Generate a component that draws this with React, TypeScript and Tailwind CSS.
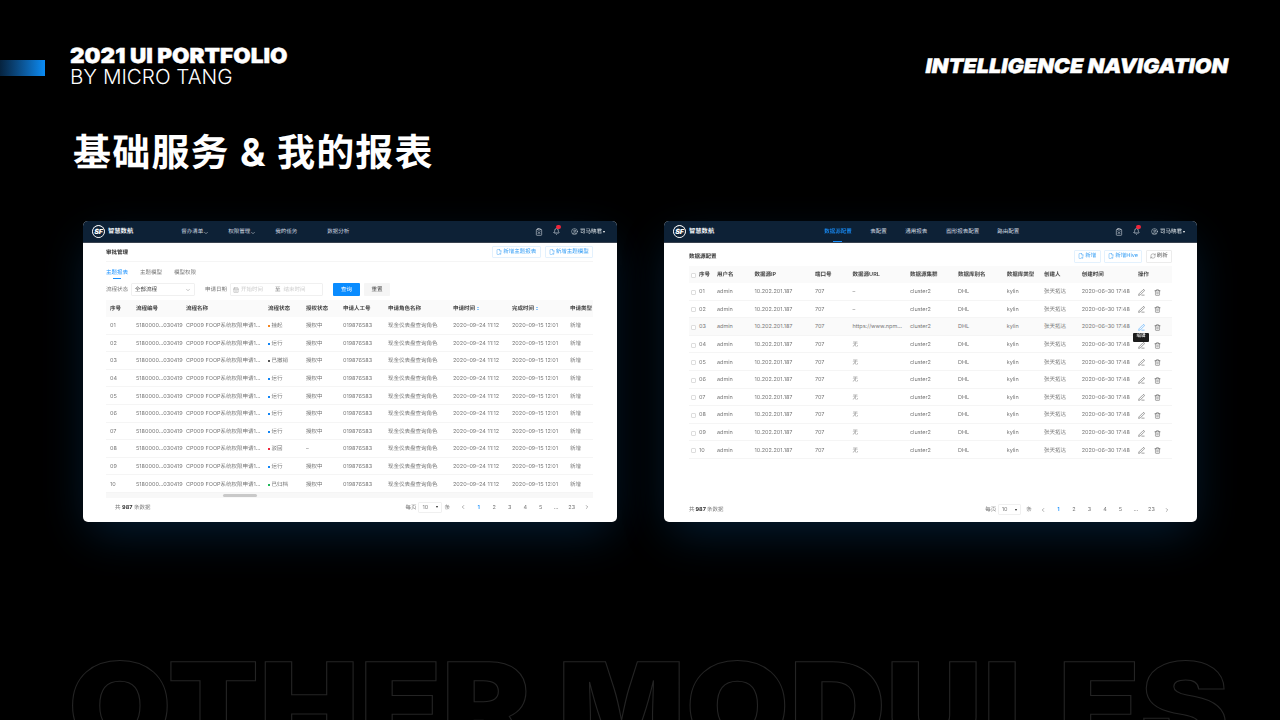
import React from "react";
import { Bell, ChevronDown, ChevronLeft, ChevronRight, CalendarDays, FilePlus2, RefreshCw, PenLine, Trash2, ClipboardX, CircleUser } from "lucide-react";

const cn = "font-['Inter','Noto_Sans_CJK_SC',sans-serif] [text-rendering:geometricPrecision]";

function Logo() {
  return (
    <div className="flex items-center gap-[3px]">
      <div className="w-[13px] h-[13px] rounded-full bg-white flex items-center justify-center border-[1.5px] border-white">
        <div className="w-full h-full rounded-full bg-[#0d2136] flex items-center justify-center text-white text-[7px] leading-none font-black italic">SF</div>
      </div>
      <span className="text-[6.3px] leading-none font-bold text-[#f0f3f6]">智慧数航</span>
    </div>
  );
}

function TopRight() {
  return (
    <div className="flex items-center text-[#e6ebef] text-[5.5px]">
      <ClipboardX size={8} strokeWidth={1.6} />
      <div className="relative ml-[10px]">
        <Bell size={7} strokeWidth={2} />
        <span className="absolute -top-[3px] left-[3.5px] w-[5px] h-[4px] rounded-full bg-[#f0263c]" />
      </div>
      <CircleUser size={7} strokeWidth={1.6} className="ml-[11.5px]" />
      <span className="ml-[1.5px] pt-[2px]">司马晓君</span>
      <span className="ml-[1px] w-0 h-0 border-x-[1.5px] border-x-transparent border-t-[2px] border-t-white" />
    </div>
  );
}

function OutlineButton({ label, w, h, neutral }: { label: string; w: string; h: string; neutral?: boolean }) {
  return (
    <div className={`${w} ${h} border rounded-[1px] flex items-center justify-center gap-[1px] text-[5.5px] ${neutral ? "text-[#555] border-[#ececec]" : "text-[#2f9bf5] border-[#e3f1fd]"}`}>
      {neutral ? <RefreshCw size={6} strokeWidth={1.5} /> : <FilePlus2 size={6} strokeWidth={1.7} />}
      <span className="pt-[1px]">{label}</span>
    </div>
  );
}

function Pagination({ gapSelect, gapUnit, gapPrev, shift }: { gapSelect: string; gapUnit: string; gapPrev: string; shift: string }) {
  const pages = ["1", "2", "3", "4", "5", "…", "23"];
  return (
    <div className={`flex items-center text-[5.5px] text-[#777] ${shift}`}>
      <span className="pt-[1px]">每页</span>
      <div className={`${gapSelect} w-[23.5px] h-[11px] border border-[#f0f0f0] rounded-[1px] flex items-center justify-between px-[3px]`}>
        <span className="pt-[1px]">10</span>
        <span className="w-0 h-0 border-x-[1.5px] border-x-transparent border-t-[2px] border-t-[#222]" />
      </div>
      <span className={`${gapUnit} pt-[1px]`}>条</span>
      <div className={`${gapPrev} w-[15.5px] flex justify-center text-[#444]`}><ChevronLeft size={6} strokeWidth={1.7} /></div>
      {pages.map((p, i) => (
        <span key={p} className={`w-[15.5px] pt-[1px] text-center ${i === 0 ? "text-[#1890ff] font-semibold" : ""}`}>{p}</span>
      ))}
      <div className="w-[15.5px] flex justify-center text-[#444]"><ChevronRight size={6} strokeWidth={1.7} /></div>
    </div>
  );
}

const leftStatus: [string, string][] = [
  ["挂起", "bg-[#f5861f]"], ["运行", "bg-[#1185f5]"], ["已撤销", "bg-[#555555]"], ["运行", "bg-[#1185f5]"], ["运行", "bg-[#1185f5]"],
  ["运行", "bg-[#1185f5]"], ["运行", "bg-[#1185f5]"], ["驳回", "bg-[#f0263c]"], ["运行", "bg-[#1185f5]"], ["已归档", "bg-[#1fb85a]"],
];
const leftCols = "grid grid-cols-[26px_50px_82px_38px_37px_45px_65px_59px_58px_23px] pl-[4px] pt-[2px] items-center whitespace-nowrap";

function SortMark() {
  return (
    <span className="inline-flex flex-col ml-[2px] gap-[1px] align-middle">
      <span className="w-0 h-0 border-x-[1px] border-x-transparent border-b-[1.5px] border-b-[#1890ff]" />
      <span className="w-0 h-0 border-x-[1px] border-x-transparent border-t-[1.5px] border-t-[#1890ff]" />
    </span>
  );
}

const cardClass = "h-[301px] rounded-[5px] shadow-[0_16px_44px_-6px_rgba(12,90,160,0.32)]";
const innerClass = "w-full h-full bg-white rounded-[5px] overflow-hidden flex flex-col blur-[0.4px]";

function LeftCard() {
  return (
    <div className={`w-[534px] ${cardClass}`}>
      <div className={innerClass}>
        <div className="h-[22px] shrink-0 bg-[#0d2136] border-b border-[#39424f] flex items-center pl-[9px] pr-[12px]">
          <Logo />
          <div className="flex items-center text-[5.5px] text-[#d5dce3] ml-[48px] pt-[2px]">
            <span className="flex items-center w-[47px]">督办清单<ChevronDown size={6} strokeWidth={2} /></span>
            <span className="flex items-center w-[47px]">权限管理<ChevronDown size={6} strokeWidth={2} /></span>
            <span className="w-[52px]">我的任务</span>
            <span>数据分析</span>
          </div>
          <div className="ml-auto"><TopRight /></div>
        </div>
        <div className="flex-1 flex flex-col pl-[23px] pr-[24px]">
          <div className="h-[19px] shrink-0 border-b border-[#f5f5f5] flex items-center justify-between">
            <span className="text-[5.5px] font-semibold text-[#333] pt-[2px]">审批管理</span>
            <div className="flex gap-[4px]">
              <OutlineButton label="新增主题报表" w="w-[48.5px]" h="h-[12px]" />
              <OutlineButton label="新增主题模型" w="w-[48.5px]" h="h-[12px]" />
            </div>
          </div>
          <div className="h-[18px] shrink-0 flex items-center text-[5.5px] text-[#777] gap-[12px] pt-[4px]">
            <span className="relative text-[#1890ff]">
              主题报表
              <span className="absolute left-[7px] right-[7px] -bottom-[2px] h-[1px] bg-[#1890ff]" />
            </span>
            <span>主题模型</span>
            <span>模型权限</span>
          </div>
          <div className="h-[13px] mt-[3px] shrink-0 flex items-center text-[5.5px] text-[#777]">
            <span className="w-[25px] pt-[2px]">流程状态</span>
            <div className="w-[64px] h-full border border-[#f0f0f0] rounded-[1px] flex items-center justify-between px-[3px] text-[#444]">
              <span className="pt-[2px]">全部流程</span><ChevronDown size={6} strokeWidth={1.2} />
            </div>
            <span className="ml-[10px] w-[25px] pt-[2px]">申请日期</span>
            <div className="w-[93px] h-full border border-[#f0f0f0] rounded-[1px] flex items-center px-[2px] text-[#ccc]">
              <CalendarDays size={6} strokeWidth={1.2} className="text-[#777]" />
              <span className="ml-[2px] w-[34px] pt-[2px]">开始时间</span>
              <span className="text-[#777] pt-[2px]">至</span>
              <span className="ml-[3px] pt-[2px]">结束时间</span>
            </div>
            <div className="ml-[10px] w-[27px] h-full pt-[2px] bg-[#0a8cff] text-white flex items-center justify-center rounded-[1px]">查询</div>
            <div className="ml-[4px] w-[26px] h-full pt-[2px] bg-[#f5f5f5] text-[#444] flex items-center justify-center rounded-[1px]">重置</div>
          </div>
          <div className={`${leftCols} h-[17px] mt-[4px] shrink-0 bg-[#fafafa] text-[5.5px] font-semibold text-[#444]`}>
            <span>序号</span><span>流程编号</span><span>流程名称</span><span>流程状态</span><span>授权状态</span><span>申请人工号</span><span>申请角色名称</span>
            <span>申请时间<SortMark /></span><span>完成时间<SortMark /></span><span>申请类型</span>
          </div>
          {leftStatus.map(([s, c], i) => (
            <div key={i} className={`${leftCols} h-[17.6px] shrink-0 border-b border-[#f5f5f5] text-[5.5px] text-[#777]`}>
              <span>{String(i + 1).padStart(2, "0")}</span>
              <span>5180000…030419</span>
              <span>CP009 FOOP系统权限申请1…</span>
              <span className="flex items-center gap-[1.5px]"><span className={`w-[2px] h-[2px] ${c}`} />{s}</span>
              <span>{s === "驳回" ? "–" : "授权中"}</span>
              <span>019876583</span>
              <span>现金仪表盘查询角色</span>
              <span>2020–09–24 11:12</span>
              <span>2020–09–15 12:01</span>
              <span>新增</span>
            </div>
          ))}
          <div className="h-[5px] shrink-0 bg-[#f8f8f8] pl-[117px]">
            <div className="w-[34px] h-[3px] mt-[1px] rounded-full bg-[#c9c9c9]" />
          </div>
          <div className="flex-1 flex items-center justify-between text-[5.5px] text-[#777] pl-[9px] pb-[5px]">
            <span className="pt-[1px]">共 <b className="text-[#333]">987</b> 条数据</span>
            <Pagination gapSelect="ml-[2px]" gapUnit="ml-[2.5px]" gapPrev="ml-[5.5px]" shift="-mr-[2px]" />
          </div>
        </div>
      </div>
    </div>
  );
}

const rightCols = "grid grid-cols-[8px_18px_37.6px_60.4px_37.6px_57.4px_48px_48.7px_37.3px_37.7px_56.3px_33.9px] pl-[2px] items-center whitespace-nowrap";

function RightCard() {
  return (
    <div className={`w-[533px] ${cardClass}`}>
      <div className={innerClass}>
        <div className="h-[22px] shrink-0 bg-[#0d2136] border-b border-[#39424f] flex items-center pl-[9px] pr-[12px]">
          <Logo />
          <div className="flex items-center text-[5.5px] text-[#d5dce3] ml-[110px] h-full pt-[1px]">
            <span className="relative w-[46px] h-full flex items-center text-[#1890ff] font-medium">
              数据源配置
              <span className="absolute left-[9px] w-[9px] bottom-0 h-[1px] bg-[#1890ff]" />
            </span>
            <span className="w-[35px]">表配置</span>
            <span className="w-[41px]">通用报表</span>
            <span className="w-[51px]">图形报表配置</span>
            <span>路由配置</span>
          </div>
          <div className="ml-auto"><TopRight /></div>
        </div>
        <div className="flex-1 flex flex-col px-[25px]">
          <div className="h-[23px] pt-[3px] shrink-0 flex items-center justify-between">
            <span className="text-[5.5px] font-semibold text-[#333] pt-[2px]">数据源配置</span>
            <div className="flex gap-[3.3px]">
              <OutlineButton label="新增" w="w-[27px]" h="h-[13px]" />
              <OutlineButton label="新增Hive" w="w-[38.3px]" h="h-[13px]" />
              <OutlineButton label="刷新" w="w-[26.4px]" h="h-[13px]" neutral />
            </div>
          </div>
          <div className={`${rightCols} h-[17px] pt-[2px] shrink-0 bg-[#fafafa] text-[5.5px] font-semibold text-[#444]`}>
            <span className="w-[5px] h-[5px] border border-[#ddd] rounded-[1px] bg-white" />
            <span>序号</span><span>用户名</span><span>数据源IP</span><span>端口号</span><span>数据源URL</span><span>数据源集群</span><span>数据库别名</span><span>数据库类型</span><span>创建人</span><span>创建时间</span><span>操作</span>
          </div>
          {Array.from({ length: 10 }, (_, i) => (
            <div key={i} className={`${rightCols} relative h-[17.6px] pt-[2px] shrink-0 border-b border-[#f5f5f5] text-[5.5px] text-[#777] ${i === 2 ? "bg-[#fafafa]" : ""}`}>
              <span className="w-[5px] h-[5px] border border-[#ddd] rounded-[1px] bg-white" />
              <span>{String(i + 1).padStart(2, "0")}</span>
              <span>admin</span>
              <span>10.202.201.187</span>
              <span>707</span>
              <span>{i < 2 ? "–" : i === 2 ? "https://www.npm…" : "无"}</span>
              <span>cluster2</span>
              <span>DHL</span>
              <span>kylin</span>
              <span>张天拓达</span>
              <span>2020–06–30 17:48</span>
              <span className="flex items-center gap-[9px] text-[#333]">
                <PenLine size={7} strokeWidth={1.6} className={i === 2 ? "text-[#1890ff]" : ""} />
                <Trash2 size={7} strokeWidth={1.4} />
              </span>
              {i === 2 && (
                <span className="absolute z-10 left-[444px] top-[15px] w-[16px] h-[9px] bg-[#1c1c1c] text-white text-[4.5px] flex items-center justify-center rounded-[1px]">编辑</span>
              )}
            </div>
          ))}
          <div className="flex-1 flex items-end justify-between pb-[7px] text-[5.5px] text-[#777]">
            <span className="h-[11px] pt-[1px] flex items-center">共 <b className="text-[#333] mx-[1px]">987</b> 条数据</span>
            <Pagination gapSelect="ml-[1.5px]" gapUnit="ml-[5px]" gapPrev="ml-[3.5px]" shift="-mr-[2.75px]" />
          </div>
        </div>
      </div>
    </div>
  );
}

export default function App() {
  return (
    <div className={`relative w-[1280px] h-[720px] bg-black overflow-hidden text-white ${cn}`}>
      <div className="absolute left-[68px] top-[631px] origin-left scale-x-[1.115] text-[120px] leading-[1.25] font-black whitespace-nowrap text-transparent [-webkit-text-stroke:1px_#242424]">OTHER MODULES</div>
      <div className="relative flex justify-between pt-[45px] pr-[52px]">
        <div className="flex">
          <div className="w-[45px] h-[16px] mt-[15px] bg-gradient-to-r from-[#06233f] to-[#0a8cf5]" />
          <div className="ml-[25px]">
            <div className="origin-left scale-x-[1.095] text-[20.6px] leading-[21px] font-black [-webkit-text-stroke:0.4px_white]">2021 UI PORTFOLIO</div>
            <div className="text-[20.6px] leading-[21px] font-light">BY MICRO TANG</div>
          </div>
        </div>
        <div className="origin-right scale-x-[1.08] h-[42px] text-[20px] leading-[42px] font-black italic [-webkit-text-stroke:0.4px_white]">INTELLIGENCE NAVIGATION</div>
      </div>
      <div className="relative mt-[43px] pl-[73px] h-[46px] text-[38px] leading-[46px] font-bold tracking-[1.2px]">基础服务 &amp; 我的报表</div>
      <div className="relative mt-[45px] pl-[83px] pr-[83px] flex justify-between">
        <LeftCard />
        <RightCard />
      </div>
    </div>
  );
}
